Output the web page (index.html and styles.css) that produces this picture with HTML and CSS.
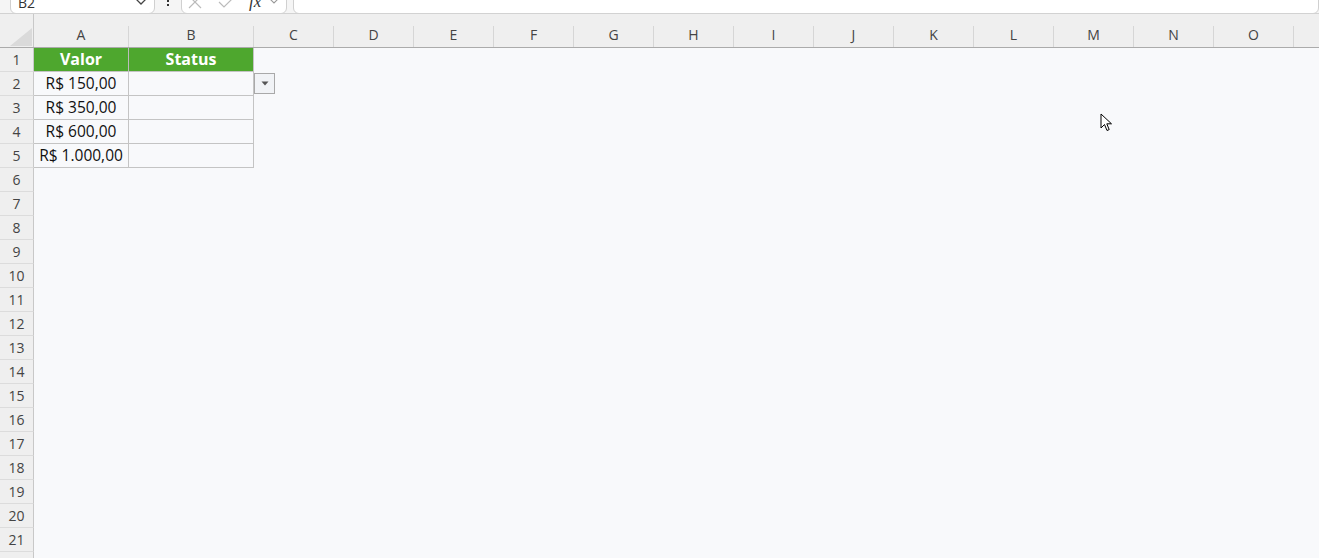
FILE: index.html
```html
<!DOCTYPE html>
<html lang="pt-BR">
<head>
    <meta charset="UTF-8">
    <title>Planilha</title>
    <link rel="stylesheet" href="styles.css">
</head>
<body>
    <div class="topbar">
        <div class="namebox">
            <span class="nb-text">B2</span>
            <svg class="chev" width="12" height="8" viewBox="0 0 12 8"><path d="M1 1 L6 6 L11 1" fill="none" stroke="#444" stroke-width="1.3"/></svg>
        </div>
        <div class="dots"><i></i><i></i></div>
        <div class="fxbox">
            <svg width="16" height="16" viewBox="0 0 16 16"><path d="M2 2 L14 14 M14 2 L2 14" stroke="#bbb" stroke-width="1.2"/></svg>
            <svg width="16" height="16" viewBox="0 0 16 16"><path d="M2 8 L7 13 L15 5" fill="none" stroke="#bbb" stroke-width="1.2"/></svg>
            <span class="fx">fx</span>
            <svg width="10" height="8" viewBox="0 0 10 8"><path d="M1 1 L5 5 L9 1" fill="none" stroke="#999" stroke-width="1.1"/></svg>
        </div>
        <div class="formula"></div>
    </div>

    <div class="sheet">
        <div class="head-row">
            <div class="corner"><svg width="22" height="18" viewBox="0 0 22 18"><path d="M22 0 L22 18 L0 18 Z" fill="#dadada"/></svg></div>
            <div class="col-head w-a"><span>A</span></div>
            <div class="col-head w-b"><span>B</span></div>
            <div class="col-head"><span>C</span></div>
            <div class="col-head"><span>D</span></div>
            <div class="col-head"><span>E</span></div>
            <div class="col-head"><span>F</span></div>
            <div class="col-head"><span>G</span></div>
            <div class="col-head"><span>H</span></div>
            <div class="col-head"><span>I</span></div>
            <div class="col-head"><span>J</span></div>
            <div class="col-head"><span>K</span></div>
            <div class="col-head"><span>L</span></div>
            <div class="col-head"><span>M</span></div>
            <div class="col-head"><span>N</span></div>
            <div class="col-head"><span>O</span></div>
            <div class="col-head rest"></div>
        </div>

        <div class="grid">
            <div class="row">
                <div class="rh">1</div>
                <div class="cell w-a title">Valor</div>
                <div class="cell w-b title">Status</div>
            </div>
            <div class="row">
                <div class="rh">2</div>
                <div class="cell w-a data">R$ 150,00</div>
                <div class="cell w-b data"></div>
                <div class="dropdown"><svg width="8" height="5" viewBox="0 0 8 5"><path d="M0.5 0.5 L7.5 0.5 L4 4.5 Z" fill="#555"/></svg></div>
            </div>
            <div class="row">
                <div class="rh">3</div>
                <div class="cell w-a data">R$ 350,00</div>
                <div class="cell w-b data"></div>
            </div>
            <div class="row">
                <div class="rh">4</div>
                <div class="cell w-a data">R$ 600,00</div>
                <div class="cell w-b data"></div>
            </div>
            <div class="row">
                <div class="rh">5</div>
                <div class="cell w-a data">R$ 1.000,00</div>
                <div class="cell w-b data"></div>
            </div>
            <div class="row"><div class="rh">6</div></div>
            <div class="row"><div class="rh">7</div></div>
            <div class="row"><div class="rh">8</div></div>
            <div class="row"><div class="rh">9</div></div>
            <div class="row"><div class="rh">10</div></div>
            <div class="row"><div class="rh">11</div></div>
            <div class="row"><div class="rh">12</div></div>
            <div class="row"><div class="rh">13</div></div>
            <div class="row"><div class="rh">14</div></div>
            <div class="row"><div class="rh">15</div></div>
            <div class="row"><div class="rh">16</div></div>
            <div class="row"><div class="rh">17</div></div>
            <div class="row"><div class="rh">18</div></div>
            <div class="row"><div class="rh">19</div></div>
            <div class="row"><div class="rh">20</div></div>
            <div class="row"><div class="rh">21</div></div>
            <div class="row"><div class="rh"></div></div>
        </div>

        <svg class="cursor" width="14" height="20" viewBox="0 0 14 20">
            <path d="M1 1 L1 15 L4.5 11.5 L7 17.5 L9.2 16.6 L6.8 10.8 L11.5 10.8 Z" fill="#fff" stroke="#000" stroke-width="1" stroke-linejoin="miter"/>
        </svg>
    </div>
</body>
</html>
```

FILE: styles.css
```css
body {
    margin: 0;
    padding: 0;
    background-color: #f8f9fb;
    font-family: "Open Sans", "Liberation Sans", sans-serif;
    color: #222;
    overflow: hidden;
}
.topbar {
    height: 13px;
    display: flex;
    align-items: flex-end;
    background-color: #f5f5f5;
    border-bottom: 1px solid #d2d2d2;
    overflow: hidden;
}
.namebox,
.fxbox,
.formula {
    height: 24px;
    flex: none;
    box-sizing: border-box;
    background-color: #fff;
    border: 1px solid #d0d0d0;
    border-radius: 6px;
    margin-bottom: -1px;
    display: flex;
    align-items: center;
}
.namebox {
    width: 145px;
    margin-left: 10px;
    justify-content: space-between;
    padding: 0 7px;
    font-size: 14px;
}
.nb-text {
    color: #333;
}
.dots {
    width: 26px;
    flex: none;
    display: flex;
    flex-direction: column;
    align-items: center;
    gap: 2px;
    align-self: flex-start;
}
.dots i {
    width: 2px;
    height: 2px;
    background-color: #333;
}
.fxbox {
    width: 106px;
    gap: 14px;
    padding: 0 5px;
}
.fx {
    font-family: "Liberation Serif", serif;
    font-style: italic;
    font-size: 17px;
    color: #333;
    margin-left: 2px;
    margin-right: -6px;
}
.formula {
    flex: 1;
    margin-left: 6px;
}
.sheet {
    position: relative;
}
.head-row {
    display: flex;
    height: 33px;
    background-color: #efefef;
    border-bottom: 1px solid #ababab;
}
.corner {
    width: 34px;
    flex: none;
    display: flex;
    align-items: flex-end;
    justify-content: flex-end;
    border-right: 1px solid #c8c8c8;
    box-sizing: border-box;
    padding: 0 1px 1px 0;
}
.col-head {
    width: 80px;
    flex: none;
    display: flex;
    align-items: flex-end;
}
.col-head span {
    flex: 1;
    height: 21px;
    line-height: 17px;
    text-align: center;
    font-size: 14px;
    color: #444;
    border-right: 1px solid #d6d6d6;
}
.col-head.rest {
    flex: 1;
}
.w-a {
    width: 95px;
}
.w-b {
    width: 125px;
}
.row {
    display: flex;
    height: 24px;
    position: relative;
}
.rh {
    width: 34px;
    flex: none;
    box-sizing: border-box;
    background-color: #efefef;
    border-right: 1px solid #c8c8c8;
    border-bottom: 1px solid #dcdcdc;
    text-align: center;
    font-size: 14px;
    line-height: 24px;
    color: #444;
}
.cell {
    flex: none;
    box-sizing: border-box;
    text-align: center;
    line-height: 23px;
    border-right: 1px solid #c4c4c4;
    border-bottom: 1px solid #c4c4c4;
}
.title {
    background-color: #4ea72e;
    color: #fff;
    font-weight: bold;
    font-size: 16px;
}
.title.w-a {
    border-right-color: #bcbcbc;
}
.data {
    font-size: 15.5px;
    color: #111;
}
.dropdown {
    position: absolute;
    left: 254px;
    top: 1px;
    width: 21px;
    height: 21px;
    box-sizing: border-box;
    border: 1px solid #a9a9a9;
    background-color: #f1f3f6;
    display: flex;
    align-items: center;
    justify-content: center;
}
.cursor {
    position: absolute;
    left: 1100px;
    top: 99px;
}
```
